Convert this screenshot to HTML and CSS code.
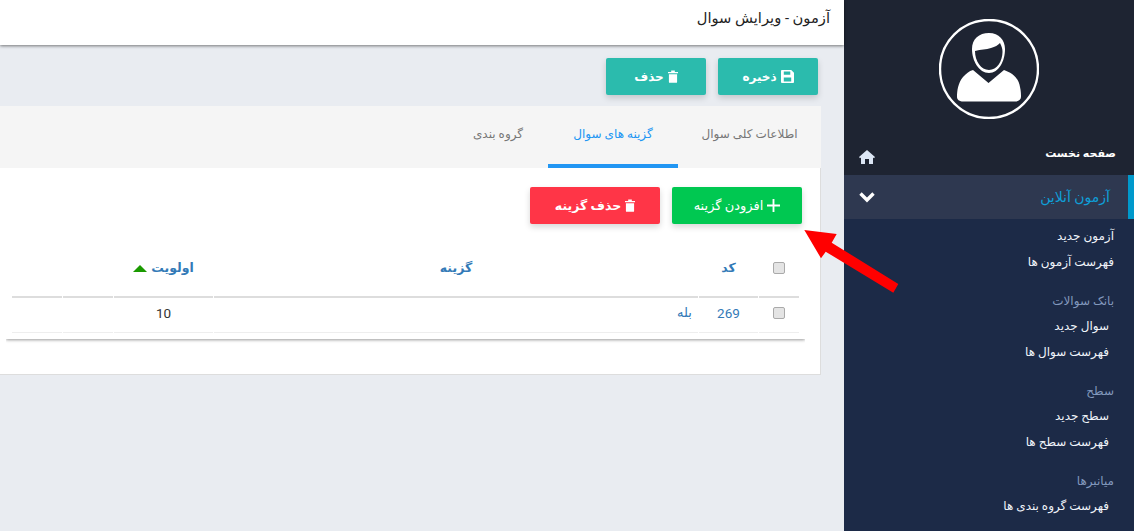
FILE: index.html
```html
<!DOCTYPE html>
<html lang="fa" dir="rtl">
<head>
    <meta charset="UTF-8">
    <title>آزمون - ویرایش سوال</title>
    <link rel="stylesheet" href="styles.css">
</head>
<body>
    <aside class="sidebar">
        <div class="avatar-box">
            <svg class="avatar" viewBox="0 0 100 100" width="100" height="100">
                <circle cx="50" cy="50" r="49" fill="none" stroke="#fff" stroke-width="2.4"/>
                <path fill="#fff" fill-rule="evenodd" d="M33 30C33 20 40 14 50 14C60 14 66 21 66 30C66 42 60 54 50 54C40 54 33 42 33 30ZM36 32C36 42 42 51 50 51C58 51 63.500 42 63.500 33C63.500 30 63 28 61 24C59 26 56 28 52 29C47 31 42 30 36 32Z"/>
                <path fill="#fff" d="M34 51L49.500 64L65 51C74 54 80 60 81 68C82 72 82 76 82 78C82 81 79 82.500 76 82.500H24C21 82.500 18 81 18 78C18 72 19 64 24 58C27 55 30 52 34 51Z"/>
            </svg>
        </div>
        <a class="home-link">
            <span>صفحه نخست</span>
            <svg viewBox="0 0 16 14" width="16" height="14"><path fill="#dce6f5" d="M8 0l8 7-1 1.200-1-.8V14h-4V9H6v5H2V7.400l-1 .8L0 7z"/></svg>
        </a>
        <a class="active-link">
            <span>آزمون آنلاین</span>
            <svg viewBox="0 0 16 12" width="16" height="12"><path fill="none" stroke="#fff" stroke-width="3.400" d="M1.500 2.500L8 9l6.500-6.500"/></svg>
        </a>
        <nav class="submenu">
            <div class="menu-group first">
                <a>آزمون جدید</a>
                <a>فهرست آزمون ها</a>
            </div>
            <div class="menu-group">
                <div class="menu-title">بانک سوالات</div>
                <a>سوال جدید</a>
                <a>فهرست سوال ها</a>
            </div>
            <div class="menu-group">
                <div class="menu-title">سطح</div>
                <a>سطح جدید</a>
                <a>فهرست سطح ها</a>
            </div>
            <div class="menu-group">
                <div class="menu-title">میانبرها</div>
                <a>فهرست گروه بندی ها</a>
            </div>
        </nav>
    </aside>

    <main class="content">
        <header class="topbar">آزمون - ویرایش سوال</header>
        <div class="actions">
            <button class="btn btn-teal">
                <svg viewBox="0 0 14 14" width="13" height="13"><path fill="#fff" d="M1 0h10l3 3v10a1 1 0 0 1-1 1H1a1 1 0 0 1-1-1V1a1 1 0 0 1 1-1zm2 1.500V5h7V1.500zM3 8v4.500h8V8z"/></svg>
                ذخیره
            </button>
            <button class="btn btn-teal">
                <svg viewBox="0 0 11 14" width="10" height="13"><path fill="#fff" d="M0 2h3.500V.5h4V2H11v1.500H0zM1 4.500h9V13a1 1 0 0 1-1 1H2a1 1 0 0 1-1-1z"/></svg>
                حذف
            </button>
        </div>
        <div class="tabs">
            <a class="tab tab-first">اطلاعات کلی سوال</a>
            <a class="tab tab-active">گزینه های سوال</a>
            <a class="tab tab-last">گروه بندی</a>
        </div>
        <section class="panel">
            <div class="panel-actions">
                <button class="btn btn-green">
                    <svg viewBox="0 0 14 14" width="13" height="13"><path fill="#fff" d="M6 0h2v6h6v2H8v6H6V8H0V6h6z"/></svg>
                    افزودن گزینه
                </button>
                <button class="btn btn-red">
                    <svg viewBox="0 0 11 14" width="10" height="13"><path fill="#fff" d="M0 2h3.500V.5h4V2H11v1.500H0zM1 4.500h9V13a1 1 0 0 1-1 1H2a1 1 0 0 1-1-1z"/></svg>
                    حذف گزینه
                </button>
            </div>
            <div class="table-wrap">
                <table class="grid">
                    <thead>
                        <tr>
                            <th class="col-check"><span class="check"></span></th>
                            <th class="col-code">کد</th>
                            <th class="col-option">گزینه</th>
                            <th class="col-order">اولویت <span class="sort-up"></span></th>
                            <th class="col-empty"></th>
                            <th class="col-empty"></th>
                        </tr>
                    </thead>
                    <tbody>
                        <tr>
                            <td><span class="check"></span></td>
                            <td class="num link">269</td>
                            <td class="link cell-text">بله</td>
                            <td class="num">10</td>
                            <td></td>
                            <td></td>
                        </tr>
                    </tbody>
                </table>
            </div>
        </section>
    </main>

    <svg class="arrow" viewBox="0 0 100 70" width="100" height="70">
        <path fill="#f00" d="M4.300 4L36.700 8L31.700 16.700L98.300 58L93.300 66.700L25.700 25.700L21 32.300Z"/>
    </svg>
</body>
</html>
```

FILE: styles.css
```css
* {
    box-sizing: border-box;
}
html, body {
    height: 100%;
}
body {
    margin: 0;
    display: flex;
    overflow: hidden;
    position: relative;
    background-color: #e9ecf1;
    font-family: Roboto, "DejaVu Sans", sans-serif;
    font-size: 12px;
    color: #333;
}
.sidebar {
    width: 290px;
    flex-shrink: 0;
    background-color: #1e2432;
    color: #fff;
}
.avatar-box {
    display: flex;
    justify-content: center;
    padding-top: 19px;
    height: 137px;
}
.home-link {
    display: flex;
    justify-content: space-between;
    align-items: center;
    height: 38px;
    padding: 0 18px 0 15px;
    font-weight: bold;
    font-size: 11px;
}
.home-link span {
    padding-bottom: 6px;
}
.home-link svg {
    margin-top: 2px;
}
.active-link {
    display: flex;
    justify-content: space-between;
    align-items: center;
    height: 44px;
    padding: 0 18px 0 15px;
    background-color: #2e3850;
    border-right: 6px solid #0099cc;
    color: #0f9fd8;
    font-size: 14px;
}
.submenu {
    background-color: #1c2a47;
    height: 312px;
    padding-right: 20px;
    color: #f0f4fa;
}
.menu-group {
    display: flex;
    flex-direction: column;
    padding-top: 15px;
}
.menu-group a {
    height: 26px;
    line-height: 26px;
    padding-right: 5px;
}
.menu-group.first {
    padding-top: 4px;
}
.menu-group.first a {
    padding-right: 0;
}
.menu-title {
    height: 23px;
    line-height: 23px;
    color: #8298bd;
}
.content {
    flex: 1;
    min-width: 0;
}
.topbar {
    height: 45px;
    background-color: #fff;
    box-shadow: 0 1px 3px rgba(0, 0, 0, 0.5);
    padding: 9px 14px 0 0;
    font-size: 14.700px;
    color: #222;
}
.actions {
    display: flex;
    gap: 12px;
    padding: 13px 26px 0 0;
}
.btn {
    display: flex;
    align-items: center;
    justify-content: center;
    gap: 4px;
    border: none;
    border-radius: 2px;
    height: 37px;
    font-family: inherit;
    font-weight: bold;
    font-size: 12px;
    color: #fff;
    box-shadow: 0 3px 6px rgba(0, 0, 0, 0.16);
}
.btn-teal {
    width: 100px;
    background-color: #2bbbad;
}
.btn-green {
    width: 130px;
    background-color: #00c851;
    font-weight: normal;
    font-size: 13px;
}
.btn-red {
    width: 130px;
    background-color: #ff3547;
    font-size: 12.500px;
}
.tabs {
    display: flex;
    margin: 11px 23px 0 0;
    height: 62px;
    background-color: #f5f5f5;
}
.tab {
    height: 62px;
    padding-top: 21px;
    width: 130px;
    text-align: center;
    color: #777;
}
.tab-first {
    width: 143px;
}
.tab-last {
    width: 100px;
}
.tab-active {
    border-bottom: 4px solid #2196f3;
    color: #2196f3;
}
.panel {
    height: 207px;
    margin-right: 23px;
    background-color: #fff;
    border-right: 1px solid #ddd;
    border-bottom: 1px solid #ddd;
}
.panel-actions {
    display: flex;
    gap: 12px;
    padding: 19px 18px 0 0;
}
.table-wrap {
    margin: 20px 15px 0 0;
    width: 799px;
    padding: 0 5px 6px;
    box-shadow: 0 1px 3px rgba(0, 0, 0, 0.4);
    clip-path: inset(0 0 -6px 0);
}
.grid {
    width: 789px;
    border-collapse: separate;
    border-spacing: 1px 0;
    table-layout: fixed;
}
.grid th {
    height: 54px;
    border-bottom: 2px solid #ddd;
    padding-bottom: 7px;
    font-size: 12.500px;
    color: #337ab7;
}
.grid td {
    height: 35px;
    border-bottom: 1px solid #eee;
    text-align: center;
    padding-bottom: 6px;
}
.grid td.cell-text {
    text-align: right;
    padding-right: 6px;
    font-size: 13px;
}
.col-check { width: 40px; }
.col-code { width: 59px; }
.col-option { width: 484px; }
.col-order { width: 99px; }
.col-empty { width: 50px; }
.check {
    display: inline-block;
    width: 12px;
    height: 12px;
    vertical-align: middle;
    background-color: #e4e4e4;
    border: 1px solid #aaa;
    border-radius: 2px;
}
.link {
    color: #337ab7;
}
.num {
    font-size: 13.500px;
}
.sort-up {
    display: inline-block;
    width: 0;
    height: 0;
    margin-right: 1px;
    vertical-align: middle;
    border-left: 7px solid transparent;
    border-right: 7px solid transparent;
    border-bottom: 7px solid #1a9a00;
}
.arrow {
    position: absolute;
    left: 800px;
    top: 226px;
}
```
